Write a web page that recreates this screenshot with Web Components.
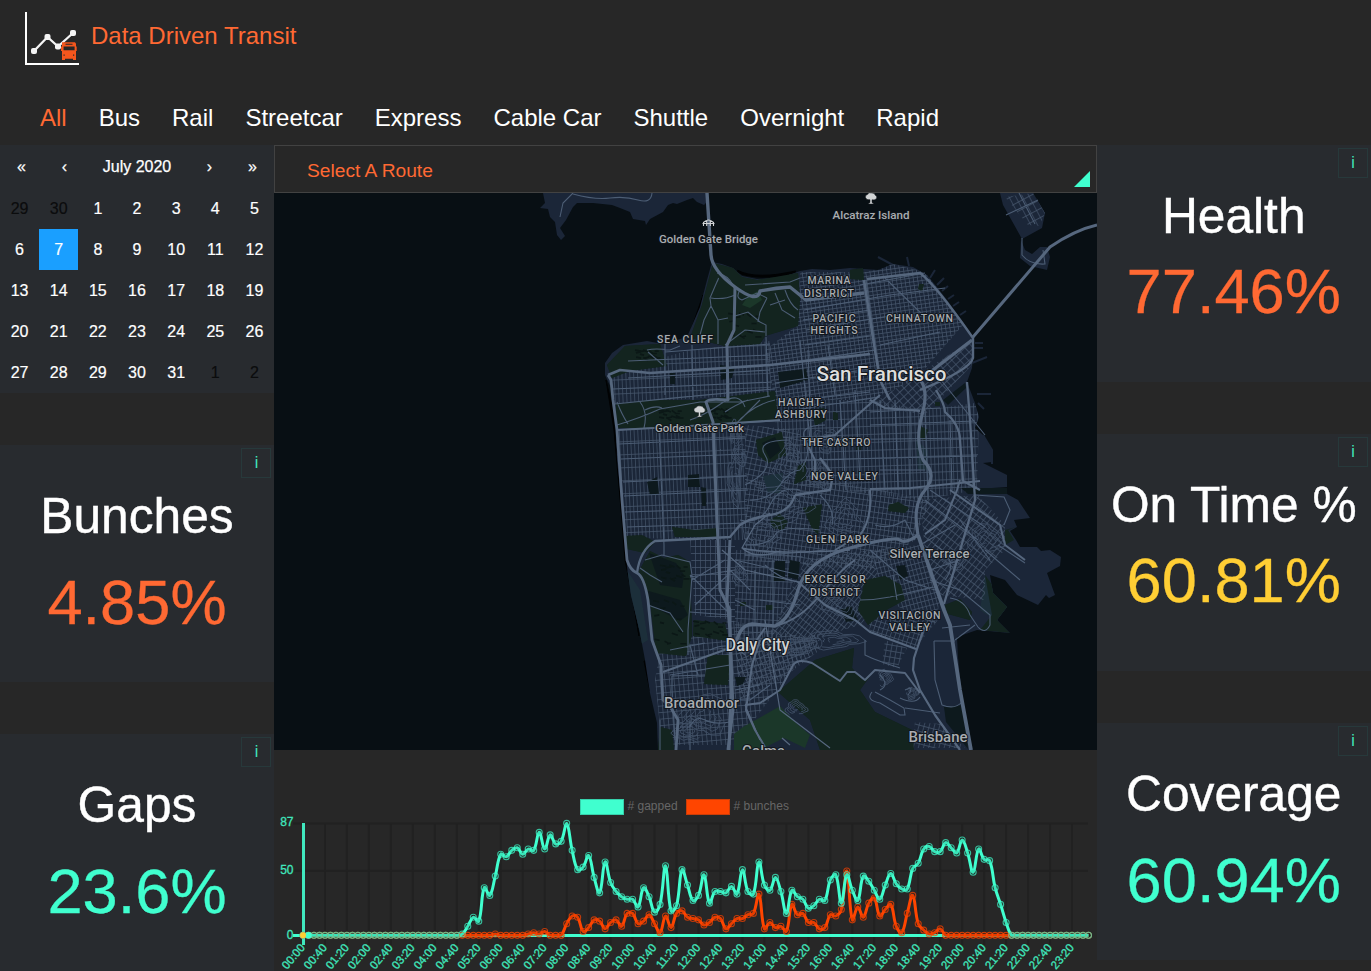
<!DOCTYPE html>
<html lang="en">
<head>
<meta charset="utf-8">
<title>Data Driven Transit</title>
<style>
html,body{margin:0;height:100%;background:#272727;overflow:hidden}
body{font-family:"Liberation Sans",Arial,sans-serif;color:#fff}
</style>
</head>
<body>
<transit-app></transit-app>
<script>
const define = (name, html, setup) => customElements.define(name, class extends HTMLElement {
  connectedCallback() {
    if (this.shadowRoot) return;
    this.attachShadow({mode: 'open'}).innerHTML = html;
    if (setup) setup(this, this.shadowRoot);
  }
});

define('app-header', `
<style>
:host{display:flex;height:96px;box-sizing:border-box;padding:11px 0 0 24px;color:#ff6933;font-size:24px;line-height:28px}
svg{width:56px;height:56px;display:block;margin-right:11px}
h1{font:inherit;margin:11px 0 0}
</style>
<svg viewBox="24 11 56 56"><path d="M26 12v52h53" fill="none" stroke="#fff" stroke-width="2"/>
<path d="M34 51 47.500 37 58 46.500 73 33" fill="none" stroke="#f4f4f4" stroke-width="2.300"/>
<g fill="#f4f4f4"><rect x="31" y="48" width="6" height="6" rx="2"/><rect x="44.500" y="34" width="6" height="6" rx="2"/><rect x="55" y="43.500" width="6" height="6" rx="2"/><rect x="70" y="30" width="6" height="6" rx="2"/></g>
<path fill="#f4561d" d="M62 42.300h13l1 1.500v2.700h.7v4.500H76v9h-3v-1.300h-8V60h-3v-9h-1v-4.500h1z"/>
<path fill="#272727" d="M65.500 43.800h7v1h-7zM63.600 46.600h11v3.600h-11zM63.500 54.500h1.200v1.200h-1.200zM73 54.500h1.200v1.200H73z"/></svg>
<h1><slot></slot></h1>`);

define('mode-nav', `
<style>
:host{display:flex;gap:32px;height:49px;padding-left:40px;font-size:24px;line-height:28px;box-sizing:border-box;padding-top:8px}
a{white-space:nowrap}a.on{color:#ff6933}
</style>`, (el, root) => {
  el.getAttribute('modes').split(',').forEach((m, i) => {
    const a = document.createElement('a');
    a.textContent = m; if (!i) a.className = 'on';
    root.append(a);
  });
});

define('month-calendar', `
<style>
:host{display:block;height:247.500px;background:#282b2f;font-size:16px}
nav{display:flex;height:43px;align-items:center;text-align:center;-webkit-text-stroke:.25px #fff}
nav span{width:43px}nav b{font-weight:400;flex:1}
.grid{display:grid;grid-template-columns:repeat(7,1fr);grid-auto-rows:41px}
.grid span{display:flex;align-items:center;justify-content:center;-webkit-text-stroke:.2px currentColor}
.out{color:#0b0c0d}.on{background:#1a9fff}
</style>
<nav><span>«</span><span>‹</span><b>July 2020</b><span>›</span><span>»</span></nav><div class="grid"></div>`, (el, root) => {
  const days = [29, 30];
  for (let i = 1; i < 32; i++) days.push(i);
  days.push(1, 2);
  root.querySelector('.grid').innerHTML = days.map((d, i) =>
    `<span class="${i < 2 || i > 32 ? 'out' : i === 8 ? 'on' : ''}">${d}</span>`).join('');
});

define('stat-card', `
<style>
:host{display:block;height:236.500px;background:#282b2f;text-align:center;position:relative;white-space:nowrap}
button{position:absolute;top:3px;right:3px;width:30px;height:30px;box-sizing:border-box;background:none;border:1px solid #27393b;color:#40e6bd;font:16px "Liberation Sans",sans-serif;padding:0 0 0 1px}
h2{font-size:49.700px;line-height:58px;font-weight:400;margin:0;padding-top:42px;-webkit-text-stroke:.4px #fff}
p{font-size:63.200px;line-height:74px;margin:0;padding-top:var(--drop,9px);color:var(--tone);-webkit-text-stroke:.3px var(--tone)}
</style>
<button>i</button><h2><slot name="label"></slot></h2><p><slot></slot></p>`);

define('route-picker', `
<style>
:host{display:flex;height:48px;box-sizing:border-box;border:1px solid #424242;color:#ff6933;font-size:19.200px;align-items:center;justify-content:space-between;padding:3px 6px 0 32px}
svg{width:16px;height:16px;align-self:flex-end;margin-bottom:5px}
</style>
<span><slot></slot></span><svg viewBox="0 0 16 16"><path d="M16 0v16H0z" fill="#40ffcf"/></svg>`);

define('city-map', `
<style>:host{display:block;height:557px;background:#080f14}svg{display:block;width:100%;height:100%}
text{font-family:Roboto,sans-serif;font-weight:500;text-anchor:middle;paint-order:stroke;stroke:#10151b;stroke-width:2px;stroke-linejoin:round;fill:#a9adb1}
</style><svg viewBox="274 193 823 557" preserveAspectRatio="none"></svg>`, (el, root) => {
  const P = a => 'M' + a + 'Z';
  const coast = P('712,262 722,264 733,268 742,276 757,279 780,278 800,271 812,269 830,270 850,268 878,270 893,264 913,267 927,275 937,287 947,300 963,322 973,337 973,357 972,368 967,382 975,403 979,417 975,428 983,435 992,450 992,462 983,463 1007,475 1007,487 977,489 978,493 1007,494 1018,500 1030,518 1014,520 1017,527 1010,531 1016,540 1020,547 1037,547 1041,551 1050,550 1061,557 1060,566 1047,573 1055,595 1049,598 1046,595 1038,605 1017,595 1005,580 990,575 993,593 1007,607 997,620 1010,633 977,630 957,637 958,657 963,707 972,751 658,751 657,723 650,693 645,660 640,633 631,595 627,567 625,537 617,460 616,423 612,390 605,375 605,363 612,353 623,345 647,341 663,344 687,337 700,307 707,280');
  // [outline, angle, column pitch, row pitch] of each street grid
  const regions = [
    ['627,368 690,350 770,341 771,395 700,398 615,404 612,376', -2.5, 3.9, 14],
    ['615,430 745,426 748,540 690,540 626,537', -2.5, 3.7, 13],
    ['690,540 735,540 735,620 695,615', 0, 5, 7],
    ['800,272 866,272 893,264 925,272 963,325 915,380 870,400 775,400 765,350 798,325', -8, 4.2, 3.9],
    ['972,340 972,365 925,415 870,405', -43, 6, 6],
    ['775,400 870,400 925,410 975,403 979,417 977,490 922,500 800,485 775,440', -2, 3.7, 8],
    ['745,425 800,430 800,480 760,490 745,480', 12, 5, 5.5],
    ['745,480 830,480 930,500 915,540 870,570 745,560', 8, 4.2, 5.5],
    ['660,650 730,620 815,640 735,745 662,745 655,680', -5, 4.6, 6.5],
    ['735,550 805,550 770,645 735,640', 3, 4, 6.5],
    ['805,560 870,550 885,600 860,625 810,640 770,635', 38, 3.7, 6.5],
    ['870,550 920,545 940,600 935,625 885,600', -15, 3.8, 5.5],
    ['920,500 978,495 1005,525 1005,550 985,570 985,600 940,595 925,550', 38, 4.6, 7],
    ['868,615 938,620 915,648 870,632', 18, 4.4, 5.5],
    ['885,640 907,648 897,668 882,664', 10, 5, 6],
    ['735,645 815,635 820,650 780,680 740,700', -22, 4.2, 6],
    ['915,722 940,724 965,748 912,748', 15, 5, 6],
    ['1005,197 1033,193 1045,213 1040,226 1028,225', -28, 6, 8]
  ];
  const parks = [
    '713,263 733,268 742,277 757,280 798,273 800,300 798,326 765,336 760,344 725,346 700,340 690,338 702,305',
    '607,365 625,346 660,344 667,366 630,371 612,378',
    '616,404 650,400 700,400 775,391 778,420 740,424 690,428 617,428',
    '626,536 642,535 655,542 645,553 627,549',
    '650,551 664,558 678,555 690,562 692,635 686,656 656,653 650,600 638,573',
    '694,620 725,624 729,641 693,636', '708,655 730,655 728,685 704,684',
    '672,527 695,530 718,528 719,537 675,537',
    '756,440 782,432 786,455 768,463 758,455',
    '798,466 806,462 806,480 794,484', '803,508 822,504 818,535 812,528',
    '770,520 780,514 788,522 783,530 773,528',
    '865,580 885,576 901,585 905,600 888,609 868,625 858,610',
    '778,692 815,660 854,648 852,668 862,680 870,676 860,690 875,712 912,730 914,750 820,750 810,720',
    '850,270 863,268 864,280 850,279', '889,505 898,502 909,508 905,513 888,511',
    '945,605 960,599 972,612 970,620 948,614',
    '812,410 824,408 826,420 815,426', '660,727 672,730 674,750 658,750',
    '1016,527 1008,530 1014,540 1005,545 1005,530', '985,575 1008,607 998,620 1010,633 980,630 992,615',
    '920,426 928,430 925,440 918,438', '833,412 838,413 838,420 833,420', '856,446 861,446 861,450 856,450', '935,402 940,402 940,406 935,406', '919,284 924,284 922,291 918,289', '740,602 746,602 746,606 740,606', '766,605 773,605 773,610 766,610'
  ];
  const bright = ['743,727 768,713 780,706 797,724 810,735 805,748 784,738 760,750 734,750 734,734', '748,296 758,291 762,300 750,308 742,305'];
  const dark = ['649,553 676,563 684,575 682,588 660,585', '645,590 680,600 688,615 680,621 650,605', '720,365 735,367 732,378 721,380', '778,372 806,369 808,380 780,388', '762,443 775,437 781,450 770,459', '688,475 699,474 700,487 688,487', '647,482 657,477 659,494 650,495', '775,561 785,561 785,581 773,581', '790,560 800,562 798,580 788,577', '943,400 965,383 966,388 948,405', '896,566 905,565 908,576 900,580', '841,609 851,606 858,620 846,622', '961,488 1007,488 1007,494 968,494', '944,707 963,705 968,749 946,722', '735,677 746,677 743,684 737,686', '670,373 675,373 675,384 670,384','701,487 706,488 706,506 702,506'];
  const minor = [
    'M665,344 665,395M692,345 693,400M727,345 727,398M766,337 768,396M808,350 812,470M828,345 835,395M840,400 846,490M855,390 860,480',
    'M665,352 770,344M628,361 770,355M628,378 770,370M613,389 772,382M615,404Q700,395 775,389M617,430 775,421M619,444 745,438M621,459 745,454M623,482 747,476M624,496 748,490M625,512 750,508M627,527 745,523',
    'M659,428 664,545 664,555M617,402Q622,415 628,424M640,402Q648,412 644,428M617,425Q640,418 660,409L700,402 740,402 770,396M645,410Q655,405 662,408M690,420Q705,415 722,403T745,407M725,412Q735,405 748,400M735,425Q752,405 775,400M740,420 760,400',
    'M647,350Q655,348 670,350L680,346M648,352 663,365M717,273Q728,275 733,285M717,282Q722,270 710,298L711,306 704,320 700,335M711,298Q724,300 735,295M711,306 718,320 728,318M718,320 718,344M735,316 748,312 760,322 766,325 766,336M740,290Q735,298 742,300L757,293 767,298M767,298 760,312 758,322M785,290Q790,305 798,310M775,293 782,310 795,318M770,305 785,300M745,285 790,282 800,278M725,345 745,330 765,332',
    'M804,310 890,295 945,288M806,330 895,315M866,280 875,345M880,345 940,332M885,278 925,317M860,285 925,273M805,345 870,336M775,365 875,350M775,383 870,369M800,400 870,392M800,409 880,397M803,320 870,310',
    'M870,412 940,408M870,425 975,421M800,440 975,438M800,460 977,456M895,400 898,490M910,412 910,495M937,375 985,435M880,400 885,490M925,412 928,500M950,420 952,490',
    'M745,485Q775,470 765,455T790,440M750,500Q770,500 780,485T800,470M740,520Q760,525 770,505T800,490M745,545Q770,545 775,535T820,530M745,555Q780,555 825,550M735,560 800,575M800,470Q812,455 805,440T825,425M820,495Q836,510 832,525',
    'M645,560 662,555 674,558 690,562 692,575 688,630 688,655M640,568 650,575 662,582M648,605 670,613 683,632 M690,612 730,615M690,577 735,570M690,645 698,675M670,650 705,643M670,675 730,665M690,575 728,612M692,580 725,560M695,605 728,575',
    'M672,690 675,740M690,720 690,750M672,676 672,690M672,676 705,675M680,727 690,727Q695,715 705,720T730,722M735,690 760,685M738,700 750,700 770,685M730,570 750,590M735,600 755,610M755,570 755,625M765,565Q780,580 800,582M773,560V625',
    'M875,525Q890,530 905,520L915,540M870,550 905,580 935,590M930,490 985,527M925,500 978,540M920,545 955,525M930,570 960,560M860,600Q875,600 890,597L933,587M893,575 897,600M930,580 960,590 990,615 990,625Q985,635 978,627L970,615Q965,600 950,598',
    'M935,545Q960,560 945,580M975,495 1004,497 1010,510 1004,525M960,520 990,560M998,545 1025,563M985,550 1020,580M934,641 935,680 942,705M942,705Q955,710 962,702M942,628 970,625M955,640 975,625M934,641H955',
    'M872,692Q865,700 880,703L900,715 905,715 904,708 890,700 875,692M920,697Q915,705 900,698M905,708 940,713M880,690Q890,685 880,675M908,695Q915,685 905,690M865,640V655Q875,660 900,668',
    'M660,720 660,750M710,650Q730,640 745,655M760,600 800,605M880,470 925,470M800,340 810,440',
    'M560,217 563,203 573,193M573,194Q595,200 610,198T638,200T652,193M1006,215 1038,200M1019,193 1035,224M1022,238 1022,255Q1030,265 1045,264L1043,250'
  ];
  const major = [
    ['M707,193 711,255Q712,270 735,287T760,291Q775,288 790,287L806,300 864,293', 3.4],
    ['M735,287 734,330 727,345 728,400Q708,398 706,402L713,422 720,590 730,610 730,650 731,690 729,750', 3],
    ['M608,375 620,370 650,373 770,365 870,354', 2.6],
    ['M608,375 611,380 613,400 617,430 622,500 627,560Q630,570 637,573T648,600L652,640 661,665 663,700 671,708 678,720 676,750', 2.8],
    ['M617,430 690,426 780,420', 2],
    ['M637,573Q640,550 655,541L730,537 740,525Q750,518 770,515T795,495 M795,495 830,490 833,475 820,458', 2.3],
    ['M730,540 727,600 730,630 733,710 728,750', 3],
    ['M663,672 730,648', 2],
    ['M735,650Q738,625 752,624L775,626Q790,620 798,590 806,560 850,548T900,540 918,535', 3.3],
    ['M775,626Q800,620 820,595T855,560M750,650 765,628M760,640 752,665 746,710 755,730 765,747', 2],
    ['M918,535Q912,505 925,490T923,460Q915,440 922,415T920,380L972,340', 3.2],
    ['M973,337 1050,247Q1075,230 1097,225', 3],
    ['M864,280 873,338 880,380 890,400', 2.6],
    ['M867,279 920,273Q935,284 973,338L973,358Q970,370 920,390', 2.4],
    ['M880,395 835,435 805,440 815,460 815,473', 2],
    ['M870,400 885,408 920,411', 2.2],
    ['M936,390Q945,405 945,412 960,425 960,440L963,481 980,490M967,382 970,420 975,500 944,604', 2.3],
    ['M918,535 937,590 944,610 950,625 960,690 971,750', 3.8],
    ['M925,534 945,520 957,490 960,480', 2],
    ['M870,489 910,488 980,481M870,490Q872,520 860,535L835,550', 2],
    ['M950,490 1000,525 1005,545 1025,560', 2],
    ['M798,582 825,605 855,620 870,632 916,649', 2],
    ['M925,625 914,658 913,670 920,690 935,715 960,750', 2.2],
    ['M745,705 760,703 780,690 793,665Q798,658 812,663L840,681 847,672 855,672 865,680 875,670 905,673 920,693', 2],
    ['M742,548Q755,560 780,551M770,513 755,525 742,548Q770,555 850,550', 1.3],
    ['M722,550 745,570 798,582', 1.2],
    ['M765,620 780,710 830,748M745,705 760,740M782,738 790,745', 1.2]
  ];
  let s = '<defs>', fill = '';
  regions.forEach((r, i) => {
    s += `<pattern id="g${i}" width="${r[2]}" height="${r[3]}" patternUnits="userSpaceOnUse" patternTransform="rotate(${r[1]})"><path d="M0,0H${r[2]}M0,0V${r[3]}" stroke="#46566c" stroke-width="1.300" fill="none"/></pattern>`;
    fill += `<path d="${P(r[0])}" fill="url(#g${i})"/>`;
  });
  s += `<clipPath id="land"><path d="${coast}"/></clipPath></defs><rect x="274" y="193" width="823" height="557" fill="#080f14"/>`;
  s += `<path d="M606,380 612,405 619,480 625,560 634,605 639,636 633,600 622,520 614,430Z M703,295 692,327 690,337 700,310Z M644,661h12v30h-6z" fill="#010203" stroke="#010203"/><path d="M737,271Q755,281 796,272" fill="none" stroke="#010203" stroke-width="3"/>`;
  s += `<path d="M543,193 545,203 540,208 548,209 550,217 555,222 557,235 561,240 565,236 560,228 566,220 573,207 577,203 593,203 612,205 620,208 630,212 633,219 645,221 646,225 650,219 663,212 668,205 673,203 677,204 687,200 693,198 697,202 704,205 706,203 706,193Z M1000,193 1003,205 1022,239 1042,228 1045,213 1033,193Z M1021,240 1020,258 1030,266 1047,270 1050,257 1047,247 1040,247 1032,254 1025,250Z" fill="#1b2638"/>`;
  s += `<path d="${coast}" fill="#1b2638"/>`;
  s += '<path d="M878,257 893,265M907,257l2,9M935,270l-5,8M937,285l7,-7M942,291l6,-5M948,299l6,-4M953,306l6,-4M960,315l6,-4M975,343h8M974,348h9M972,363l15,-6M977,394h14M978,403 984,409M983,435 992,450v14" stroke="#1b2638" stroke-width="2" fill="none"/>';
  s += '<g clip-path="url(#land)"><path d="M625,567 640,590 648,640 640,645Z M985,575 1008,607 998,622 980,610Z M622,358 637,358 638,366 623,367Z M916,440 928,450 928,470 918,470Z" fill="#1c2f3a"/>';
  s += parks.map(p => `<path d="${P(p)}" fill="#13241f"/>`).join('');
  s += fill + '</g>' + '<path d="M1005,197 1033,193 1045,213 1040,226 1028,225Z" fill="url(#g17)"/>';
  s += parks.map((p, i) => i === 19 || i === 20 ? '' : `<path d="${P(p)}" fill="#13241f"/>`).join('');
  s += bright.map(p => `<path d="${P(p)}" fill="#1b3729"/>`).join('');
  s += '<path d="M763,476 783,473 780,493 768,493Z" fill="#1c2f3a"/>';
  s += dark.map(p => `<path d="${P(p)}" fill="#0d191d"/>`).join('');
  // hillside contour streets
  const hills = [[790,465,18,22],[735,435,6,16],[785,505,30,22],[762,535,22,22],[735,480,8,28],[705,715,26,22],[845,520,20,20],[985,540,20,16],[835,640,30,10],[800,645,24,10],[955,560,14,10],[842,605,20,14],[690,730,18,14],[796,708,12,8],[885,678,8,9],[912,693,7,7],[825,440,12,14],[740,455,8,12],[820,475,12,16],[740,575,8,12]];
  let c = '';
  hills.forEach(([x, y, rx, ry], h) => {
    for (let k = .25; k <= 1; k += .2) {
      const pts = [];
      for (let a = 0; a <= 18; a++) {
        const t = a * .3 + h + k * 2, w = 1 + .2 * Math.sin(3 * t + h) + .1 * Math.sin(7 * t);
        pts.push((x + rx * k * w * Math.cos(t)).toFixed(1) + ',' + (y + ry * k * w * Math.sin(t)).toFixed(1));
      }
      c += 'M' + pts.join(' ');
    }
  });
  s += `<path d="${c}" fill="none" stroke="#3f4f65" stroke-width=".9"/>`;
  // fairways and wooded slopes
  let f = '';
  [[667,622,14,22],[708,628,15,7],[672,572,12,7],[742,325,14,12],[668,414,10,4],[718,413,8,5],[645,354,10,4]].forEach(([x, y, rx, ry]) => {
    for (let k = 0; k < 14; k++) {
      const a = x + rx * Math.sin(k * 2.4), b = y + ry * Math.cos(k * 1.7);
      f += `M${a.toFixed(1)},${b.toFixed(1)}l${(4 + k % 3)},${(k % 5) - 1}`;
    }
  });
  s += `<path d="${f}" stroke="#0b1716" stroke-width="1.600"/>`;
  s += `<path d="${minor.join('')}" fill="none" stroke="#4c5d74" stroke-width="1.100"/>`;
  s += `<g fill="none" stroke="#56677e" stroke-linejoin="round">${major.map(m => `<path d="${m[0]}" stroke-width="${m[1]}"/>`).join('')}</g>`;
  const tree = (x, y) => `<path transform="translate(${x} ${y})" fill="#d0d3d5" stroke="#10151b" stroke-width=".5" d="M-5.500,-1Q-6,-3.500 -3.500,-4 -2,-6.500 1,-5.500 4,-5.500 4,-3.500 6.500,-2.500 5.500,0 4,2 1,1.200V4L3,5.500H-3L-1,4V1.200Q-4.500,2 -5.500,-1Z"/>`;
  s += tree(871, 198.5) + tree(699.5, 411.5);
  s += '<path d="M703.500,226v-3.500Q708.500,217.500 713.500,222.500v3.500M702.500,223.500h12M706.700,226v-5.500M710.300,226v-5.500" fill="none" stroke="#d0d3d5" stroke-width="1.100"/>';
  const labels = [
    ['Golden Gate Bridge',708.5,243,11.5,99],['Alcatraz Island',871,219,11.5,77],['MARINA',829,284,10.5,43],['DISTRICT',829,296.5,10.5,50],
    ['PACIFIC',834,321.5,10.5,43],['HEIGHTS',834,334,10.5,47],['CHINATOWN',919.5,322,10.5,67],['SEA CLIFF',685,343,10.5,56],
    ['San Francisco',881.5,381,20.5,130,'#dcdddd'],['HAIGHT-',801,405.5,10.5,46],['ASHBURY',801,418,10.5,52],['Golden Gate Park',699.5,431.5,11.5,89],
    ['THE CASTRO',836,445.5,10.5,69],['NOE VALLEY',844.5,479.5,10.5,67],['GLEN PARK',837.5,543,10.5,63],['Silver Terrace',929.5,558,12.5,80],
    ['EXCELSIOR',835,583,10.5,61],['DISTRICT',835,595.5,10.5,50],['VISITACION',909.5,618.5,10.5,62],['VALLEY',909.5,631,10.5,41],
    ['Daly City',757.5,650.5,17.5,64,'#cfd1d2'],['Broadmoor',701.5,708,15,75],['Brisbane',938,742,15,59],['Colma',763.5,756,15,43]
  ];
  s += labels.map(l => `<text x="${l[1]}" y="${l[2]}" font-size="${l[3]}" ${l[5] ? `style="fill:${l[5]}"` : ''} textLength="${l[4]}" lengthAdjust="${l[3] === 10.5 ? 'spacing' : 'spacingAndGlyphs'}">${l[0]}</text>`).join('');
  root.querySelector('svg').innerHTML = s;
});

define('headway-chart', `
<style>:host{display:block;height:221px}svg{display:block;width:100%;height:100%}
text{font:12px "Liberation Sans",sans-serif;fill:#40e6bd;stroke:#40e6bd;stroke-width:.3px}.lg{fill:#666;stroke:none}.tick{font-size:11.500px}</style>
<svg viewBox="274 750 823 221"></svg>`, (el, root) => {
  const z = n => Array(n).fill(0);
  const gapped = [...z(29),1,7,14,11,37,31,46,63,61,66,68,63,67,66,80,67,78,71,73,87,66,51,53,62,45,33,57,41,34,30,28,28,22,37,30,18,24,54,19,23,51,39,27,31,47,25,34,34,33,38,32,51,34,32,57,39,35,45,34,17,35,30,28,21,23,28,27,43,47,25,47,35,27,46,42,35,28,39,48,40,36,36,52,56,67,69,65,65,72,68,64,74,64,49,67,59,58,37,24,10,...z(15)];
  const bunches = [...z(35),1,0,0,0,0,0,1,2,1,3,0,0,0,9,15,14,3,6,12,11,5,10,12,7,17,17,9,11,16,9,2,15,6,17,19,14,13,12,8,10,14,13,5,9,13,13,16,17,32,5,10,6,7,3,24,16,17,10,10,5,6,16,15,20,50,12,22,14,25,29,15,20,24,7,2,17,31,9,4,1,2,5,...z(27)];
  const X = i => 303 + i * 5.493, Y = v => 935.3 - v * 1.287;
  const curve = d => {
    const p = d.map((v, i) => [X(i), Y(v)]), t = .4, top = Y(87), base = Y(0);
    const cl = y => Math.max(top, Math.min(base, y));
    const ctl = p.map((q, i) => {
      const a = p[Math.max(0, i - 1)], b = p[Math.min(p.length - 1, i + 1)];
      const d1 = Math.hypot(q[0] - a[0], q[1] - a[1]), d2 = Math.hypot(b[0] - q[0], b[1] - q[1]);
      const f1 = t * d1 / (d1 + d2), f2 = t * d2 / (d1 + d2);
      return [q[0] - f1 * (b[0] - a[0]), cl(q[1] - f1 * (b[1] - a[1])), q[0] + f2 * (b[0] - a[0]), cl(q[1] + f2 * (b[1] - a[1]))];
    });
    let r = 'M' + p[0];
    for (let i = 1; i < p.length; i++) r += `C${ctl[i-1][2]},${ctl[i-1][3]} ${ctl[i][0]},${ctl[i][1]} ${p[i]}`;
    return r;
  };
  let s = '', lab = '';
  for (let i = 0; i < 144; i += 4) {
    const x = X(i);
    if (i) s += `<path d="M${x},823V945" stroke="#212121" stroke-width="2"/>`;
    const m = i * 10, t = String(m / 60 | 0).padStart(2, '0') + ':' + String(m % 60).padStart(2, '0');
    lab += `<text class="tick" text-anchor="end" transform="translate(${x - .5} 945.300) rotate(-50)" y="4">${t}</text>`;
  }
  s += '<path d="M293,823.500H1088M293,870.800H1088" stroke="#212121" stroke-width="2"/>';
  s += '<path d="M293,935.500H1088.500" stroke="#40ffcf" stroke-width="3"/><path d="M303.500,823V945" stroke="#40e8bf" stroke-width="3"/>';
  const series = (d, col) => `<path d="${curve(d)}" fill="none" stroke="${col}" stroke-width="3" stroke-linejoin="round"/>` +
    d.map((v, i) => `<circle cx="${X(i)}" cy="${Y(v)}" r="3" fill="#000" fill-opacity=".1" stroke="${col}" stroke-opacity=".7" stroke-width="1.100"/>`).join('');
  s += series(bunches, '#ff4500') + series(gapped, '#40ffcf');
  // quiet hours: both series rest on the axis, so their rings blend
  for (let i = 0; i < 144; i++) if (!gapped[i] && !bunches[i]) s += `<circle cx="${X(i)}" cy="935.300" r="3" fill="none" stroke="#82b083" stroke-opacity=".75"/>`;
  // the bunches line stays visible where it rests on the axis during service
  const rest = bunches.map((v, i) => !v && i > 28 && i < 129 ? `<circle cx="${X(i)}" cy="935.300" r="3" fill="none" stroke="#ff4500" stroke-opacity=".4"/>` : '').join('');
  s += rest;
  s += '<circle cx="308.500" cy="935.300" r="3.300" fill="#40ffcf"/><circle cx="303" cy="935.300" r="3" fill="#ffce34"/>';
  s += '<rect x="580.500" y="799.500" width="43" height="15" fill="#40ffcf" stroke="#36d0ab"/><rect x="686.500" y="799.500" width="43" height="15" fill="#ff4500" stroke="#cb3d08"/><text class="lg" x="627.500" y="810"># gapped</text><text class="lg" x="733.500" y="810"># bunches</text>';
  s += '<text x="293.500" y="826" text-anchor="end">87</text><text x="293.500" y="874" text-anchor="end">50</text><text x="293.500" y="939" text-anchor="end">0</text>' + lab;
  root.querySelector('svg').innerHTML = s;
});

define('transit-app', `
<style>
:host{display:flex;flex-direction:column;width:1371px;height:971px;overflow:hidden;background:#272727}
main{display:grid;grid-template-columns:274px 823px 273.500px;flex:1;min-height:0}
section{display:flex;flex-direction:column}
.side{gap:52.500px}
.red{--tone:#ff6933}.yellow{--tone:#ffce34}.green{--tone:#40ffcf}.low{--drop:20px}
</style>
<app-header>Data Driven Transit</app-header>
<mode-nav modes="All,Bus,Rail,Streetcar,Express,Cable Car,Shuttle,Overnight,Rapid"></mode-nav>
<main>
<section class="side"><month-calendar></month-calendar>
<stat-card class="red low"><span slot="label">Bunches</span>4.85%</stat-card>
<stat-card class="green low"><span slot="label">Gaps</span>23.6%</stat-card></section>
<section><route-picker>Select A Route</route-picker><city-map></city-map><headway-chart></headway-chart></section>
<section class="side"><stat-card class="red"><span slot="label">Health</span>77.46%</stat-card>
<stat-card class="yellow"><span slot="label">On Time %</span>60.81%</stat-card>
<stat-card class="green low"><span slot="label">Coverage</span>60.94%</stat-card></section>
</main>`);
</script>
</body>
</html>
